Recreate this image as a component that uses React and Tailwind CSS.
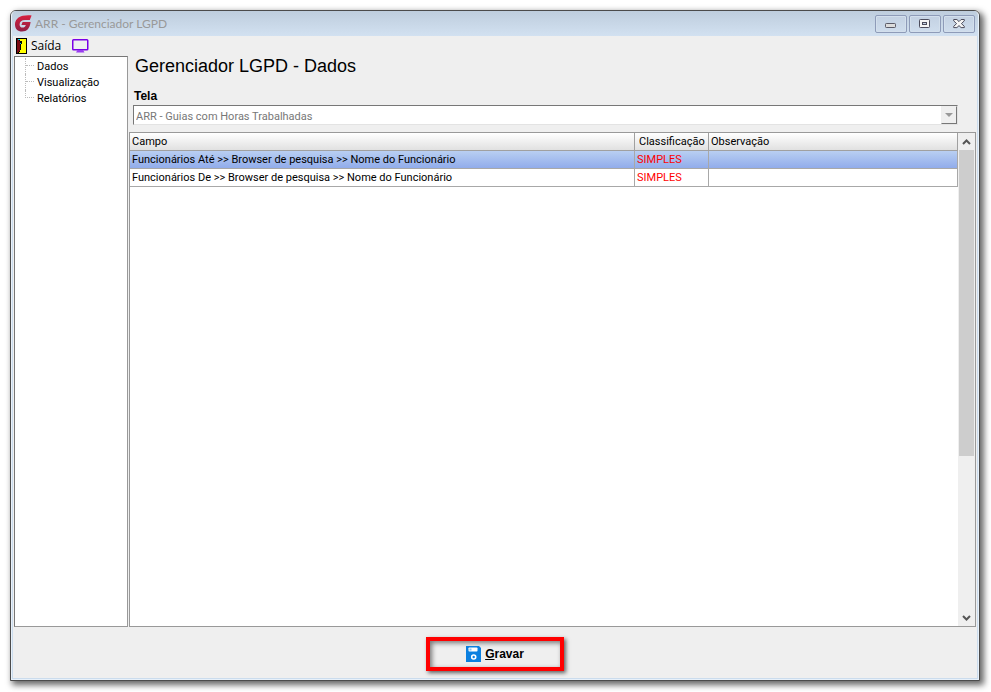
import React, { useState } from 'react';

const menuItems = ['Dados', 'Visualização', 'Relatórios'];

const fields = [
  {
    id: 1,
    campo: 'Funcionários Até >> Browser de pesquisa >> Nome do Funcionário',
    classificacao: 'SIMPLES',
    observacao: '',
  },
  {
    id: 2,
    campo: 'Funcionários De >> Browser de pesquisa >> Nome do Funcionário',
    classificacao: 'SIMPLES',
    observacao: '',
  },
];

const Logo = () => (
  <svg width="17" height="17" viewBox="0 0 17 17" aria-hidden="true">
    <defs>
      <linearGradient id="logo" x1="0" y1="0" x2="0" y2="1">
        <stop offset="0" stopColor="#d8203e" />
        <stop offset="1" stopColor="#8f1f45" />
      </linearGradient>
    </defs>
    <path
      fill="url(#logo)"
      d="M16.6 0.4C14 0 10.5 0.1 7.8 0.8C3 1.9 0 5.2 0 9.4C0 13.8 2.8 16.5 7 16.5C12 16.5 14.8 13.4 15.6 7H7.6L6.4 10H10.8C10.2 11.8 9.2 12.6 7.6 12.6C5.6 12.6 4.6 11.4 4.6 9.4C4.6 6.6 6.6 5 10 5H14.8Z"
    />
  </svg>
);

const DoorIcon = () => (
  <svg width="11" height="16" viewBox="0 0 11 16" shapeRendering="crispEdges" aria-hidden="true">
    <rect width="11" height="16" fill="#000" />
    <rect x="4" y="1" width="6" height="14" fill="#ff0" />
    <path fill="#000" d="M4 3H6V6H5V12H4Z" />
    <path fill="#7b0a12" d="M1 1H2V2H3V3H4V13H3V14H2V15H1Z" />
    <rect x="2" y="1" width="2" height="1" fill="#00d5e0" />
    <rect x="4" y="5" width="1" height="1" fill="#00d5e0" />
    <path fill="#ff0" d="M3 14H5V15H3Z" />
  </svg>
);

const MonitorIcon = () => (
  <svg width="17" height="14" viewBox="0 0 17 14" aria-hidden="true">
    <rect x="0.75" y="0.75" width="15" height="10" rx="0.8" fill="none" stroke="#7a00e6" strokeWidth="1.5" />
    <path d="M5.5 11H11L12.5 13.5H4Z" fill="#9a3cf0" />
  </svg>
);

const SaveIcon = () => (
  <svg width="15" height="16" viewBox="0 0 15 16" aria-hidden="true">
    <path fill="#0b80e0" d="M0 0H13L15 2V16H0Z" />
    <rect x="2.5" y="1.5" width="9" height="4" rx="0.8" fill="#fff" />
    <rect x="3.5" y="2.5" width="2" height="2" fill="#8fc4f2" />
    <circle cx="7.7" cy="11" r="2" fill="none" stroke="#fff" strokeWidth="1.6" />
  </svg>
);

const WindowButton = ({ label, children }) => (
  <button
    type="button"
    aria-label={label}
    className="flex h-[18px] w-8 items-center justify-center rounded-xs border border-[#8e9bb8] bg-linear-to-b from-[#c3d1e2] to-[#cfdded] shadow-[inset_0_0_0_1px_#d3dfec]"
  >
    {children}
  </button>
);

const TitleBar = () => (
  <header className="flex h-[25px] items-center bg-linear-to-b from-[#becddd] to-[#d2e1f1] pr-[3px] pl-[3px]">
    <Logo />
    <h1 className="ml-[3px] flex-1 font-[Lato,'Noto_Sans',sans-serif] text-[12px] leading-4 text-[#999]">
      ARR - Gerenciador LGPD
    </h1>
    <div className="flex gap-[2px]">
      <WindowButton label="Minimizar">
        <svg width="12" height="10" viewBox="0 0 12 10">
          <rect x="0.5" y="4.5" width="10" height="4" rx="0.8" fill="#dcdcdc" stroke="#5a5a66" />
        </svg>
      </WindowButton>
      <WindowButton label="Maximizar">
        <svg width="12" height="10" viewBox="0 0 12 10">
          <rect x="0.5" y="0.5" width="10" height="8" rx="0.8" fill="#f5f5f5" stroke="#4c4c5c" />
          <rect x="3.5" y="3.5" width="4" height="2" fill="#c5d2e3" stroke="#4c4c5c" />
        </svg>
      </WindowButton>
      <WindowButton label="Fechar">
        <svg width="12" height="10" viewBox="0 0 12 10">
          <path
            d="M0.7 0.5H3.9L6 2.6L8.1 0.5H11.3V1.9L8.4 4.6L11.3 7.3V8.6H8.1L6 6.6L3.9 8.6H0.7V7.3L3.6 4.6L0.7 1.9Z"
            fill="#f5f5f5"
            stroke="#4c4c5c"
          />
        </svg>
      </WindowButton>
    </div>
  </header>
);

const Toolbar = () => (
  <div className="flex h-5 items-center pl-[3px] font-['Open_Sans','Noto_Sans',sans-serif] text-[12px] leading-4">
    <button type="button" className="flex items-center gap-1">
      <DoorIcon />
      Saída
    </button>
    <button type="button" aria-label="Monitor" className="ml-[11px]">
      <MonitorIcon />
    </button>
  </div>
);

const Sidebar = () => (
  <nav className="w-[114px] shrink-0 border border-[#999] border-t-[#777] border-l-[#777] bg-white">
    <ul className="pt-px pl-[10px]">
      {menuItems.map((item) => (
        <li key={item} className="group flex h-4 items-center">
          <span className="h-full w-[9px] border-l border-dotted border-[#bbb] group-last:h-2 group-last:self-start group-last:border-b">
            <span className="block h-2 border-b border-dotted border-[#bbb] group-last:hidden" />
          </span>
          <a href="#" className="ml-[3px] pt-[2px] leading-4">
            {item}
          </a>
        </li>
      ))}
    </ul>
  </nav>
);

const FieldsTable = () => {
  const [selected, setSelected] = useState(1);

  return (
    <table className="w-full table-fixed border-separate border-spacing-0 text-left">
      <colgroup>
        <col />
        <col className="w-[74px]" />
        <col className="w-[249px]" />
      </colgroup>
      <thead>
        <tr className="h-[18px] bg-linear-to-b from-white to-[#dfdfdf]">
          <th className="border-r border-b border-[#a0a0a0] p-0 pt-px pl-[2px] leading-4 font-normal">Campo</th>
          <th className="border-r border-b border-[#a0a0a0] p-0 pt-px pl-[4px] leading-4 font-normal">Classificação</th>
          <th className="border-r border-b border-[#a0a0a0] p-0 pt-px pl-[2px] leading-4 font-normal">Observação</th>
        </tr>
      </thead>
      <tbody>
        {fields.map((field) => (
          <tr
            key={field.id}
            onClick={() => setSelected(field.id)}
            className={
              selected === field.id
                ? 'h-[18px] bg-linear-to-b from-[#b9cff2] to-[#8faaea]'
                : 'h-[18px] bg-white'
            }
          >
            <td className="border-r border-b border-[#a8a8a8] p-0 pt-px pl-[2px] leading-4 whitespace-nowrap">{field.campo}</td>
            <td className="border-r border-b border-[#a8a8a8] p-0 pt-px pl-[2px] leading-4 text-[#f00]">{field.classificacao}</td>
            <td className="border-r border-b border-[#a8a8a8] p-0 pt-px pl-[2px] leading-4">{field.observacao}</td>
          </tr>
        ))}
      </tbody>
    </table>
  );
};

const ScrollBar = () => (
  <div className="flex w-[17px] shrink-0 flex-col bg-[#efefef]">
    <button type="button" aria-label="Rolar para cima" className="flex h-[17px] items-center justify-center">
      <svg width="9" height="6" viewBox="0 0 9 6">
        <path d="M1 5L4.5 1.5L8 5" fill="none" stroke="#555" strokeWidth="2" />
      </svg>
    </button>
    <div className="flex-1">
      <div className="ml-px h-2/3 w-[15px] bg-[#cdcdcd]" />
    </div>
    <button type="button" aria-label="Rolar para baixo" className="flex h-[17px] items-center justify-center">
      <svg width="9" height="6" viewBox="0 0 9 6">
        <path d="M1 1L4.5 4.5L8 1" fill="none" stroke="#555" strokeWidth="2" />
      </svg>
    </button>
  </div>
);

const App = () => {
  return (
    <div className="flex min-h-screen bg-white pt-[10px] pr-[11px] pb-[11px] pl-[10px] font-[Roboto,'Liberation_Sans',sans-serif] text-[11px] text-black">
      <div className="flex flex-1 flex-col rounded-t-md border border-[#4b4b4b] bg-[#efefef] shadow-[3px_3px_6px_1px_rgba(0,0,0,0.6)]">
        <div className="flex flex-1 flex-col overflow-hidden rounded-t-[5px] border-x border-b border-[#e8f1fa]">
          <TitleBar />
          <div className="flex flex-1 flex-col border-x border-b border-[#cbdced]">
            <Toolbar />
            <div className="flex flex-1 gap-px px-px">
              <Sidebar />
              <main className="flex min-w-0 flex-1 flex-col">
                <h2 className="pl-[6px] font-['Liberation_Sans',Arial,sans-serif] text-[18px] leading-5">
                  Gerenciador LGPD - Dados
                </h2>
                <label
                  htmlFor="tela"
                  className="mt-3 pl-[5px] font-['Liberation_Sans',Arial,sans-serif] text-[12px] leading-4 font-bold"
                >
                  Tela
                </label>
                <div className="relative mt-px mr-[18px] ml-1">
                  <select
                    id="tela"
                    disabled
                    className="block h-5 w-full appearance-none border border-[#e3e3e3] border-t-[#777] border-l-[#777] bg-white pt-[3px] pl-[2px] text-[#777] opacity-100"
                  >
                    <option>ARR - Guias com Horas Trabalhadas</option>
                  </select>
                  <span className="pointer-events-none absolute top-px right-px flex h-[18px] w-4 items-center justify-center border border-t-[#eee] border-r-[#777] border-b-[#777] border-l-[#eee] bg-[#efefef]">
                    <svg width="8" height="4" viewBox="0 0 8 4">
                      <path d="M0 0H8L4 4Z" fill="#999" />
                    </svg>
                  </span>
                </div>
                <section className="mt-[7px] flex flex-1 border border-[#999] bg-white">
                  <div className="min-w-0 flex-1">
                    <FieldsTable />
                  </div>
                  <ScrollBar />
                </section>
              </main>
            </div>
            <footer className="flex h-[51px] items-center justify-center pt-[2px]">
              <button
                type="button"
                className="flex h-[34px] w-[138px] items-center justify-center gap-1 border-4 border-[#f00] bg-[#efefef] font-['Liberation_Sans',Arial,sans-serif] text-[12px] font-bold shadow-[2px_2px_4px_rgba(0,0,0,0.6),inset_2px_2px_5px_rgba(0,0,0,0.5)]"
              >
                <SaveIcon />
                <span>
                  <u>G</u>ravar
                </span>
              </button>
            </footer>
          </div>
        </div>
      </div>
    </div>
  );
};

export default App;
